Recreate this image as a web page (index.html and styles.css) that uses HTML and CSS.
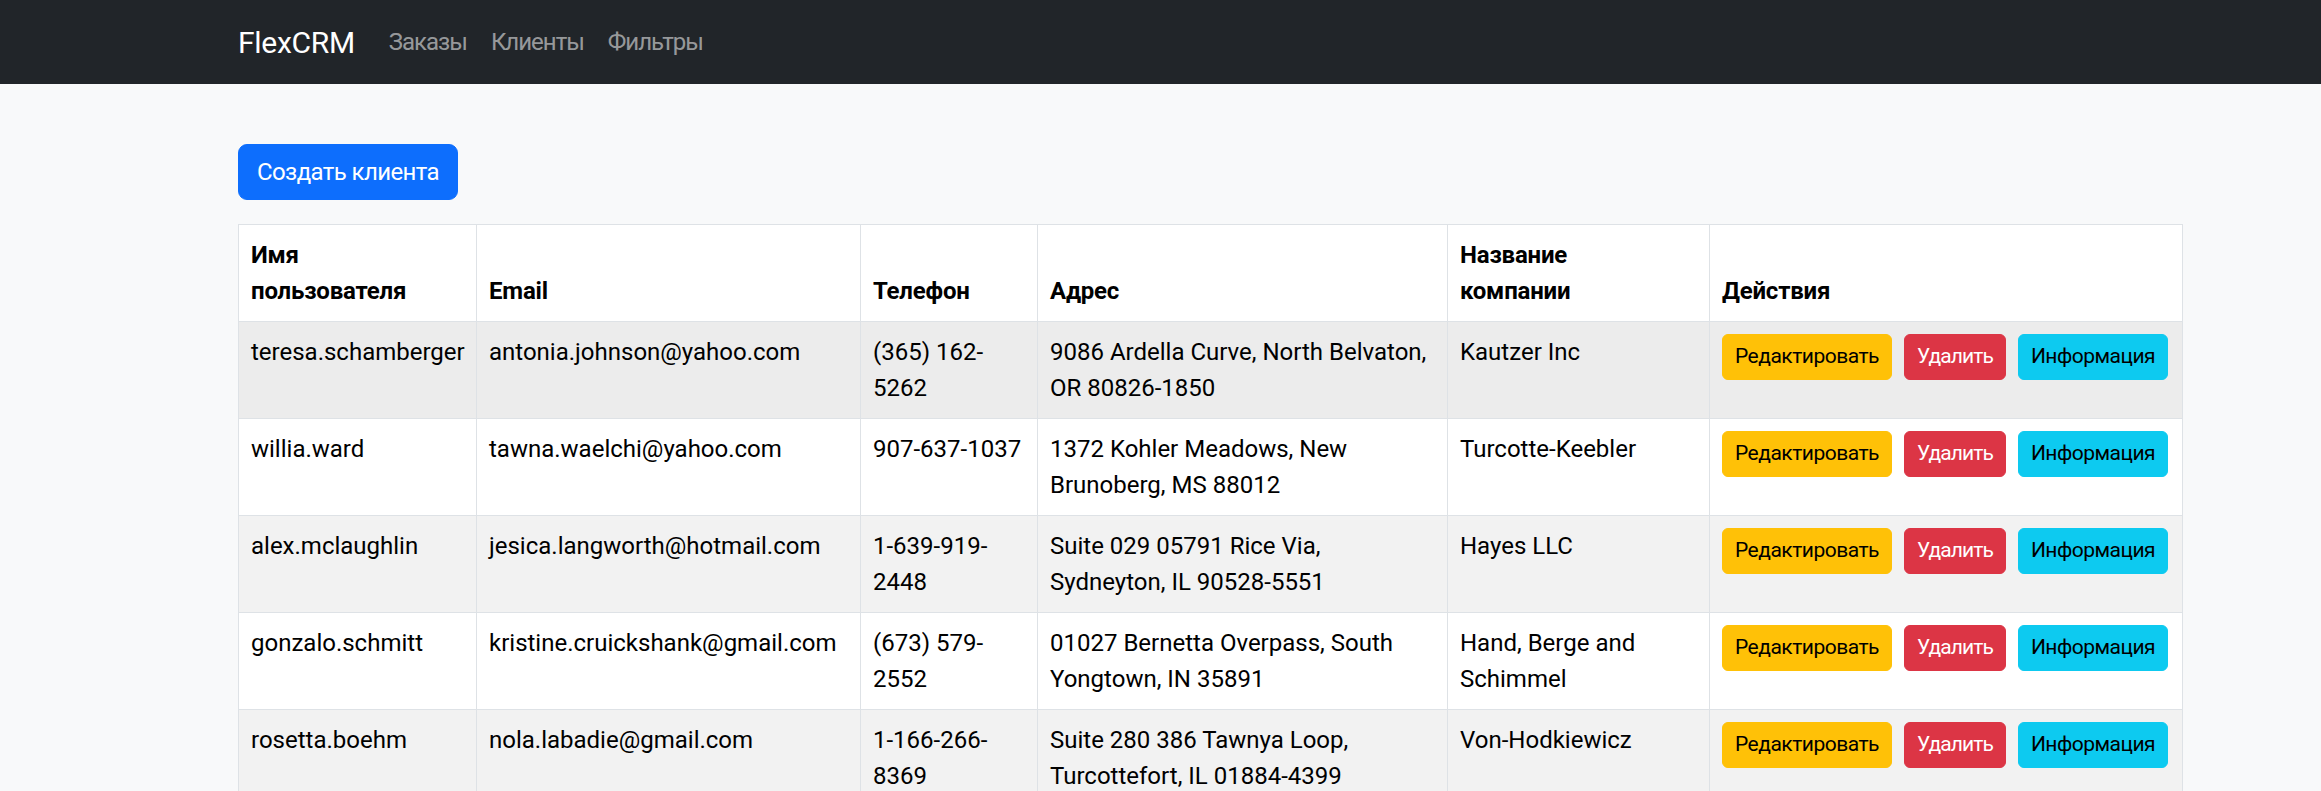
FILE: index.html
```html
<!DOCTYPE html>
<html lang="ru">
<head>
<meta charset="utf-8">
<title>FlexCRM</title>
<link rel="stylesheet" href="styles.css">
</head>
<body>
<nav class="navbar">
  <div class="container navbar-inner">
    <a class="brand" href="#">FlexCRM</a>
    <ul class="nav">
      <li><a class="nav-link" href="#">Заказы</a></li>
      <li><a class="nav-link" href="#">Клиенты</a></li>
      <li><a class="nav-link" href="#">Фильтры</a></li>
    </ul>
  </div>
</nav>
<main class="container main">
  <button class="btn btn-primary create">Создать клиента</button>
  <table class="table">
    <colgroup>
      <col class="c1"><col class="c2"><col class="c3"><col class="c4"><col class="c5"><col class="c6">
    </colgroup>
    <thead>
      <tr>
        <th>Имя<br>пользователя</th>
        <th>Email</th>
        <th>Телефон</th>
        <th>Адрес</th>
        <th>Название<br>компании</th>
        <th>Действия</th>
      </tr>
    </thead>
    <tbody>
      <tr class="hover">
        <td>teresa.schamberger</td>
        <td>antonia.johnson@yahoo.com</td>
        <td>(365) 162-5262</td>
        <td>9086 Ardella Curve, North Belvaton, OR 80826-1850</td>
        <td>Kautzer Inc</td>
        <td class="actions"><button class="btn btn-sm btn-warning">Редактировать</button><button class="btn btn-sm btn-danger">Удалить</button><button class="btn btn-sm btn-info">Информация</button></td>
      </tr>
      <tr>
        <td>willia.ward</td>
        <td>tawna.waelchi@yahoo.com</td>
        <td>907-637-1037</td>
        <td>1372 Kohler Meadows, New Brunoberg, MS 88012</td>
        <td>Turcotte-Keebler</td>
        <td class="actions"><button class="btn btn-sm btn-warning">Редактировать</button><button class="btn btn-sm btn-danger">Удалить</button><button class="btn btn-sm btn-info">Информация</button></td>
      </tr>
      <tr class="striped">
        <td>alex.mclaughlin</td>
        <td>jesica.langworth@hotmail.com</td>
        <td>1-639-919-2448</td>
        <td>Suite 029 05791 Rice Via, Sydneyton, IL 90528-5551</td>
        <td>Hayes LLC</td>
        <td class="actions"><button class="btn btn-sm btn-warning">Редактировать</button><button class="btn btn-sm btn-danger">Удалить</button><button class="btn btn-sm btn-info">Информация</button></td>
      </tr>
      <tr>
        <td>gonzalo.schmitt</td>
        <td>kristine.cruickshank@gmail.com</td>
        <td>(673) 579-2552</td>
        <td>01027 Bernetta Overpass, South Yongtown, IN 35891</td>
        <td>Hand, Berge and Schimmel</td>
        <td class="actions"><button class="btn btn-sm btn-warning">Редактировать</button><button class="btn btn-sm btn-danger">Удалить</button><button class="btn btn-sm btn-info">Информация</button></td>
      </tr>
      <tr class="striped">
        <td>rosetta.boehm</td>
        <td>nola.labadie@gmail.com</td>
        <td>1-166-266-8369</td>
        <td>Suite 280 386 Tawnya Loop, Turcottefort, IL 01884-4399</td>
        <td>Von-Hodkiewicz</td>
        <td class="actions"><button class="btn btn-sm btn-warning">Редактировать</button><button class="btn btn-sm btn-danger">Удалить</button><button class="btn btn-sm btn-info">Информация</button></td>
      </tr>
    </tbody>
  </table>
</main>
</body>
</html>
```
FILE: styles.css
```css
html, body {
  margin: 0;
  padding: 0;
  overflow: hidden;
  height: 100%;
}
body {
  background: #f8f9fa;
  color: #000;
  font-family: "Segoe UI", Roboto, "Liberation Sans", sans-serif;
  font-size: 24px;
  line-height: 36px;
}
.container {
  width: 1944px;
  margin-left: 238px;
}
.navbar {
  background: #212529;
  padding: 12px 0;
}
.navbar-inner {
  display: flex;
  align-items: center;
}
.brand {
  color: #fff;
  text-decoration: none;
  font-size: 30px;
  line-height: 45px;
  padding: 7.5px 0;
  margin-right: 22px;
  letter-spacing: -0.3px;
}
.nav {
  display: flex;
  list-style: none;
  margin: 0;
  padding: 0;
}
.nav-link {
  display: block;
  color: rgba(255, 255, 255, 0.55);
  text-decoration: none;
  padding: 12px 12px;
  letter-spacing: -1px;
}
.main {
  padding-top: 60px;
}
.btn {
  display: inline-block;
  font-family: inherit;
  font-size: 24px;
  line-height: 36px;
  padding: 9px 18px;
  border: 1px solid transparent;
  border-radius: 9px;
  cursor: pointer;
  letter-spacing: -0.6px;
}
.btn-primary {
  background: #0d6efd;
  border-color: #0d6efd;
  color: #fff;
}
.create {
  margin-bottom: 24px;
}
.btn-sm {
  font-size: 21px;
  line-height: 31.5px;
  padding: 6px 12px;
  border-radius: 6px;
  margin-right: 12px;
  letter-spacing: -0.5px;
}
.btn-warning {
  background: #ffc107;
  border-color: #ffc107;
  color: #000;
}
.btn-danger {
  background: #dc3545;
  border-color: #dc3545;
  color: #fff;
  letter-spacing: -0.9px;
}
.btn-info {
  background: #0dcaf0;
  border-color: #0dcaf0;
  color: #000;
}
.table {
  width: 1944px;
  table-layout: fixed;
  border-collapse: collapse;
  background: #fff;
  vertical-align: top;
}
.c1 { width: 238px; }
.c2 { width: 384px; }
.c3 { width: 177px; }
.c4 { width: 410px; }
.c5 { width: 262px; }
.c6 { width: 473px; }
.table th,
.table td {
  border: 1px solid #dee2e6;
  padding: 12px;
  text-align: left;
}
.table th {
  font-weight: 700;
  vertical-align: bottom;
  letter-spacing: -0.2px;
}
.table td {
  vertical-align: top;
}
.table .actions {
  white-space: nowrap;
}
.table tr.striped td {
  background: #f2f2f2;
}
.table tr.hover td {
  background: #ececec;
}
```
